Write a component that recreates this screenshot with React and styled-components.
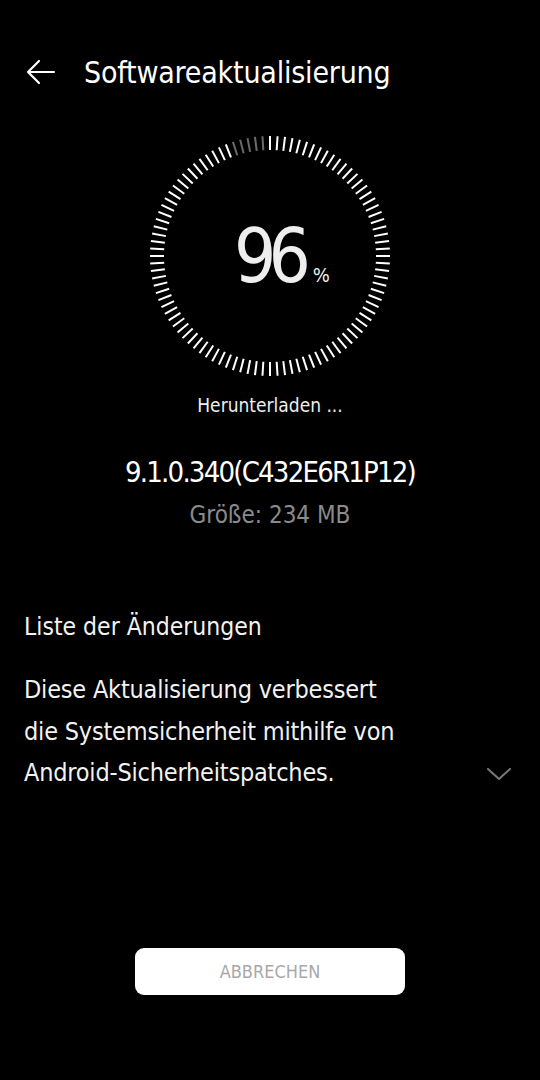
import React from "react";
import styled, { createGlobalStyle } from "styled-components";

const GlobalStyle = createGlobalStyle`
  html, body {
    margin: 0;
    padding: 0;
    background: #000;
  }
  #root {
    min-height: 1080px;
  }
`;

const FONT = `"Liberation Sans Narrow", "DejaVu Sans Condensed", "Roboto Condensed", Roboto, sans-serif`;

const Screen = styled.div`
  width: 540px;
  height: 1080px;
  background: #000;
  color: #fff;
  font-family: ${FONT};
  display: flex;
  flex-direction: column;
  overflow: hidden;
`;

const Header = styled.header`
  display: flex;
  align-items: center;
  height: 56px;
  margin-top: 44px;
  padding-left: 26px;
  gap: 28px;
`;

const Title = styled.h1`
  margin: 0;
  font-size: 30px;
  font-weight: 400;
  letter-spacing: -0.2px;
  color: #fff;
`;

const Progress = styled.div`
  display: grid;
  place-items: center;
  margin: 34px auto 0;
  width: 244px;
  height: 244px;
  & > * {
    grid-area: 1 / 1;
  }
`;

const Percent = styled.div`
  display: flex;
  align-items: baseline;
  gap: 10px;
  color: #eee;
  margin-left: 24px;
`;

const Number = styled.span`
  font-size: 74px;
  line-height: 1;
  letter-spacing: -8px;
`;

const Unit = styled.span`
  font-size: 20px;
`;

const Status = styled.div`
  margin-top: 15px;
  text-align: center;
  font-size: 19px;
  line-height: 24px;
  color: #eee;
`;

const Version = styled.div`
  margin-top: 35px;
  text-align: center;
  font-size: 29px;
  line-height: 40px;
  letter-spacing: -1.8px;
  color: #fff;
`;

const Size = styled.div`
  margin-top: 6px;
  text-align: center;
  font-size: 24px;
  line-height: 34px;
  color: #8a8a8a;
`;

const Section = styled.section`
  margin-top: 78px;
  padding: 0 24px;
`;

const SectionTitle = styled.h2`
  margin: 0;
  font-size: 24.5px;
  line-height: 34px;
  font-weight: 400;
  color: #f2f2f2;
`;

const NotesRow = styled.div`
  display: flex;
  align-items: flex-end;
  justify-content: space-between;
  margin-top: 25px;
`;

const Notes = styled.p`
  margin: 0;
  font-size: 25px;
  line-height: 41.5px;
  letter-spacing: -0.2px;
  color: #f2f2f2;
`;

const Chevron = styled.svg`
  width: 26px;
  height: 16px;
  margin: 0 4px 12px 0;
`;

const CancelButton = styled.button`
  margin: 154px auto 0;
  width: 270px;
  height: 47px;
  border: none;
  border-radius: 9px;
  background: #fff;
  color: #a8a8a8;
  font-family: ${FONT};
  font-size: 18px;
`;

function BackArrow() {
  return (
    <svg width="30" height="26" viewBox="0 0 30 26" fill="none">
      <path
        d="M2 13 H28 M13 2 L2 13 L13 24"
        stroke="#fff"
        strokeWidth="2.2"
        strokeLinecap="round"
        strokeLinejoin="round"
      />
    </svg>
  );
}

function TickRing({ value }) {
  const ticks = 100;
  const c = 122;
  const lines = [];
  for (let i = 0; i < ticks; i++) {
    const a = ((i * 360) / ticks) * (Math.PI / 180);
    const s = Math.sin(a);
    const k = Math.cos(a);
    const done = i < value - 1;
    lines.push(
      <line
        key={i}
        x1={c + 106 * s}
        y1={c - 106 * k}
        x2={c + 120 * s}
        y2={c - 120 * k}
        stroke={done ? "#fff" : "#6a6a6a"}
        strokeWidth="2"
      />
    );
  }
  return (
    <svg width="244" height="244" viewBox="0 0 244 244">
      {lines}
    </svg>
  );
}

export default function App() {
  return (
    <>
      <GlobalStyle />
      <Screen>
        <Header>
          <BackArrow />
          <Title>Softwareaktualisierung</Title>
        </Header>
        <Progress>
          <TickRing value={96} />
          <Percent>
            <Number>96</Number>
            <Unit>%</Unit>
          </Percent>
        </Progress>
        <Status>Herunterladen ...</Status>
        <Version>9.1.0.340(C432E6R1P12)</Version>
        <Size>Größe: 234 MB</Size>
        <Section>
          <SectionTitle>Liste der Änderungen</SectionTitle>
          <NotesRow>
            <Notes>
              Diese Aktualisierung verbessert
              <br />
              die Systemsicherheit mithilfe von
              <br />
              Android-Sicherheitspatches.
            </Notes>
            <Chevron viewBox="0 0 26 16" fill="none">
              <path
                d="M2 3 L13 13 L24 3"
                stroke="#7a7a7a"
                strokeWidth="2"
                strokeLinecap="round"
                strokeLinejoin="round"
              />
            </Chevron>
          </NotesRow>
        </Section>
        <CancelButton>ABBRECHEN</CancelButton>
      </Screen>
    </>
  );
}
